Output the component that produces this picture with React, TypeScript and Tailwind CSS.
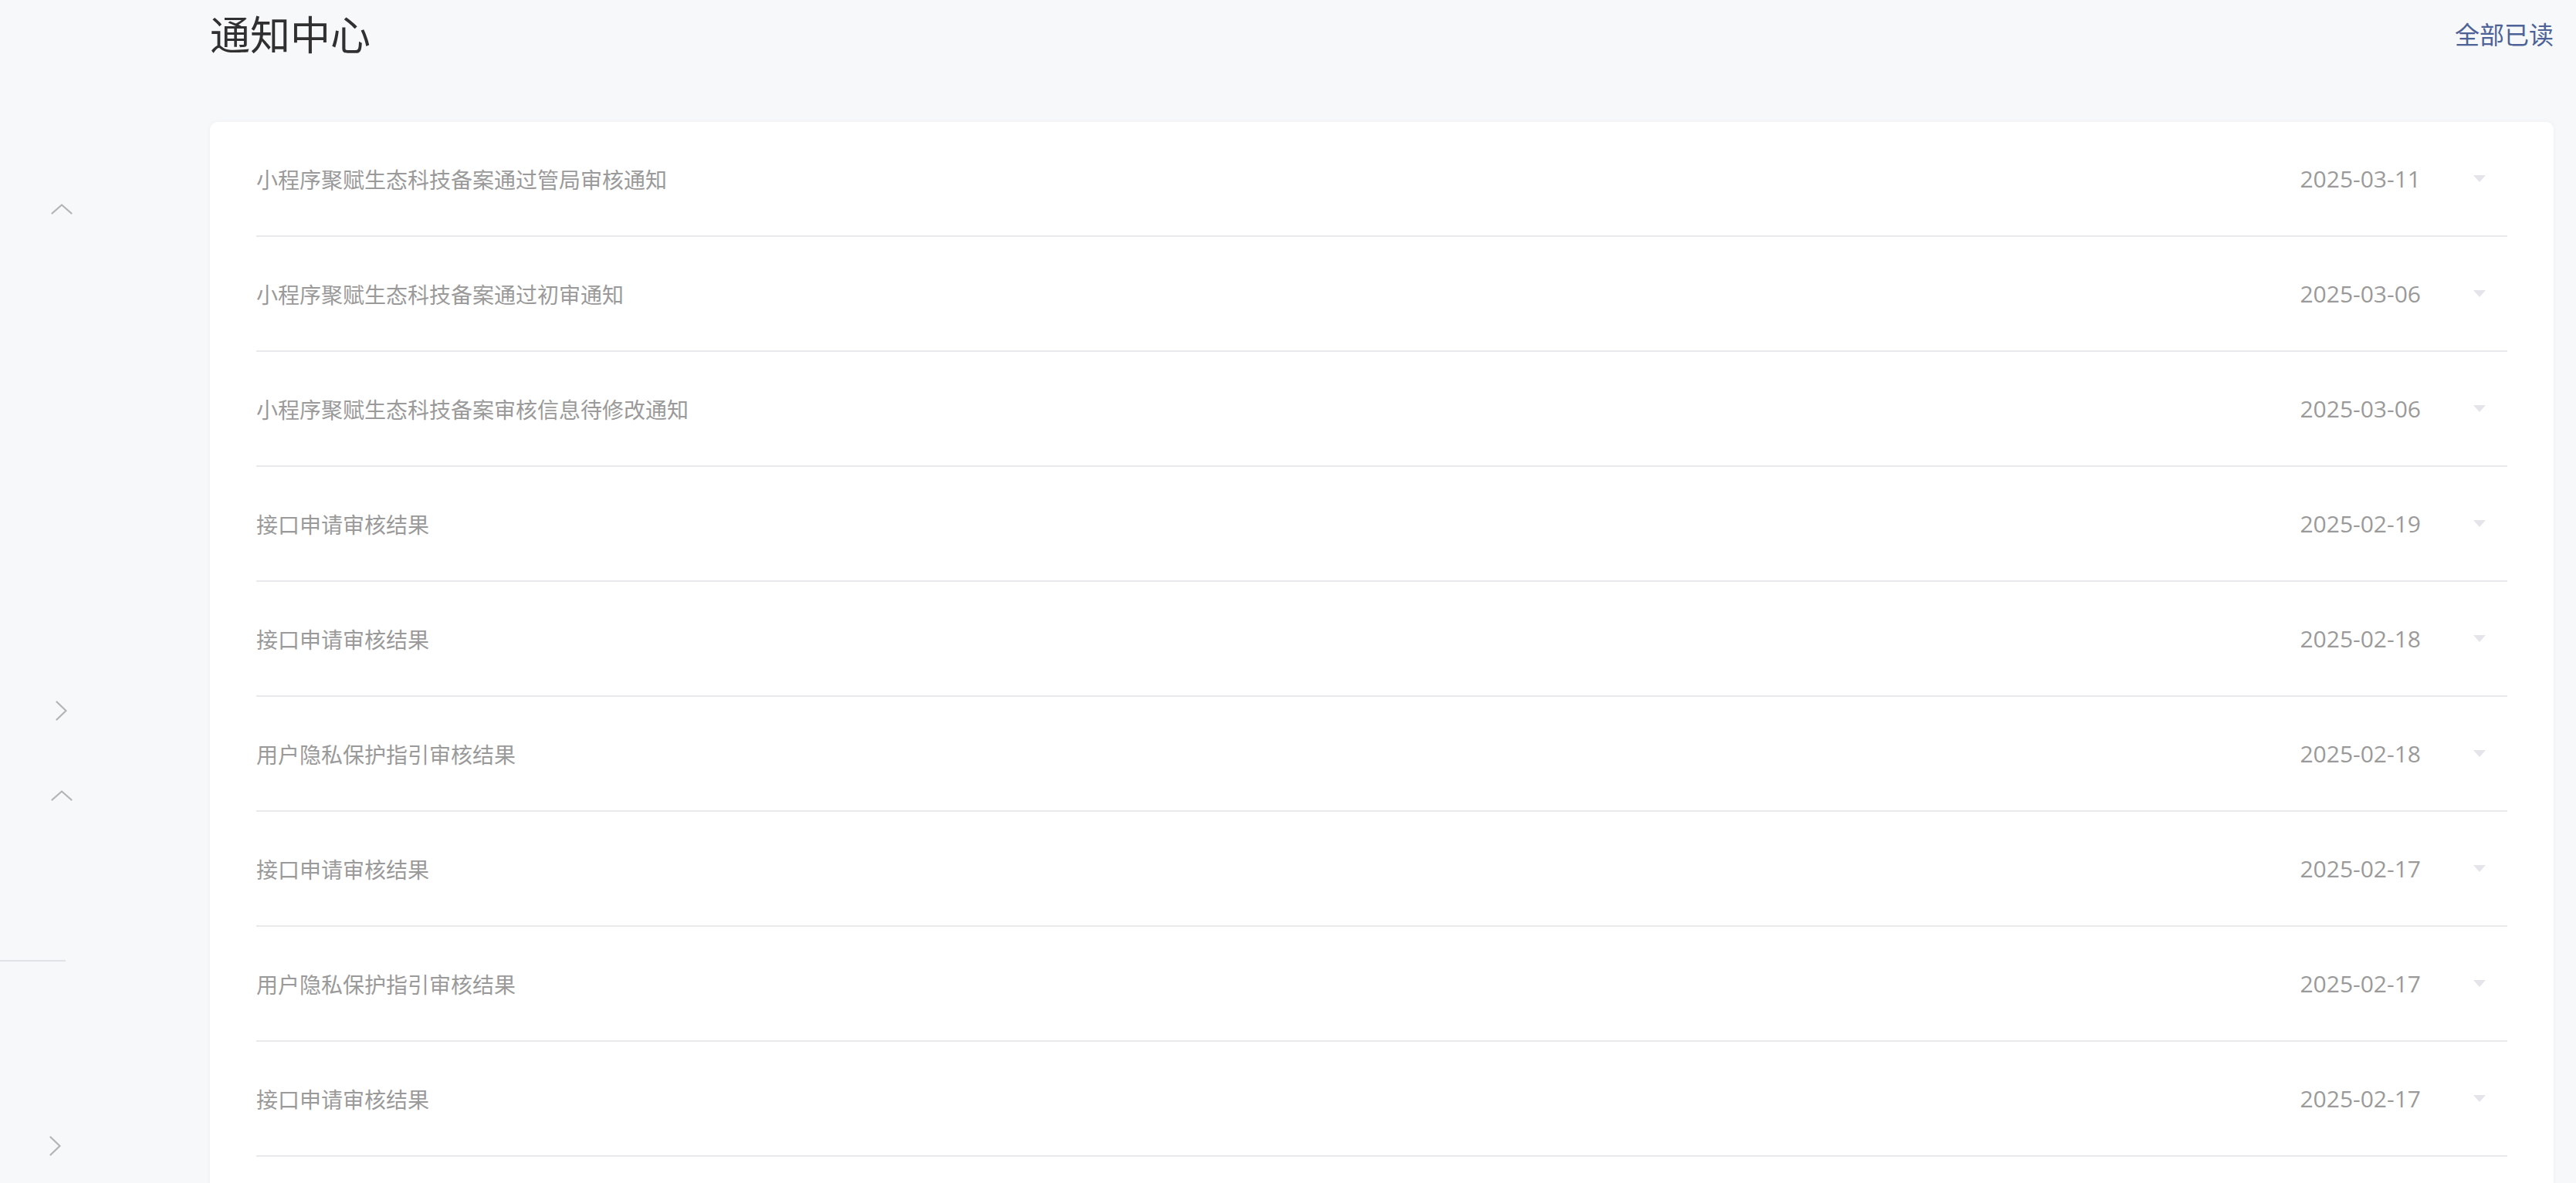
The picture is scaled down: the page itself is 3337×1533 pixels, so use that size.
import React from "react";

const rows: { title: string; date: string }[] = [
  { title: "小程序聚赋生态科技备案通过管局审核通知", date: "2025-03-11" },
  { title: "小程序聚赋生态科技备案通过初审通知", date: "2025-03-06" },
  { title: "小程序聚赋生态科技备案审核信息待修改通知", date: "2025-03-06" },
  { title: "接口申请审核结果", date: "2025-02-19" },
  { title: "接口申请审核结果", date: "2025-02-18" },
  { title: "用户隐私保护指引审核结果", date: "2025-02-18" },
  { title: "接口申请审核结果", date: "2025-02-17" },
  { title: "用户隐私保护指引审核结果", date: "2025-02-17" },
  { title: "接口申请审核结果", date: "2025-02-17" },
];

function ChevronUp() {
  return (
    <svg width="28" height="14" viewBox="0 0 28 14" fill="none">
      <path d="M1.5 12.5 L14 1.5 L26.5 12.5" stroke="#b3b3b3" strokeWidth="2.2" strokeLinecap="round" strokeLinejoin="round" />
    </svg>
  );
}

function ChevronRight() {
  return (
    <svg width="15" height="26" viewBox="0 0 15 26" fill="none">
      <path d="M1.5 1.5 L13.5 13 L1.5 24.5" stroke="#b3b3b3" strokeWidth="2.2" strokeLinecap="round" strokeLinejoin="round" />
    </svg>
  );
}

function Caret() {
  return (
    <svg width="16" height="9" viewBox="0 0 16 9">
      <polygon points="0,0 16,0 8,9" fill="#e4e4ea" />
    </svg>
  );
}

export default function App() {
  return (
    <div
      className="flex h-screen w-full overflow-hidden bg-[#f7f8fa]"
      style={{ fontFamily: '"Open Sans", "Noto Sans CJK SC", sans-serif' }}
    >
      <aside className="flex w-[272px] shrink-0 flex-col">
        <div className="ml-[66px] mt-[264px] flex h-[14px]">
          <ChevronUp />
        </div>
        <div className="ml-[72px] mt-[630px] flex h-[26px]">
          <ChevronRight />
        </div>
        <div className="ml-[66px] mt-[90px] flex h-[14px]">
          <ChevronUp />
        </div>
        <div className="mt-[206px] h-[2px] w-[85px] bg-[#e2e2e6]" />
        <div className="ml-[64px] mt-[226px] flex h-[26px]">
          <ChevronRight />
        </div>
      </aside>

      <main className="flex min-w-0 flex-1 flex-col pr-[29px]">
        <header className="flex h-[86px] shrink-0 items-center justify-between">
          <h1
            className="text-[52px] font-normal leading-none text-[#303030]"
            style={{ fontFamily: '"Noto Sans CJK SC", sans-serif' }}
          >
            通知中心
          </h1>
          <button
            className="text-[32px] leading-none text-[#4d6397]"
            style={{ fontFamily: '"Noto Sans CJK SC", sans-serif' }}
          >
            全部已读
          </button>
        </header>

        <section className="mt-[72px] flex flex-col rounded-[10px] bg-white px-[60px] shadow-[0_0_6px_rgba(0,0,0,0.04)]">
          {rows.map((r, i) => (
            <div
              key={i}
              className="flex h-[149px] shrink-0 items-center border-b-2 border-[#e8e8ed]"
            >
              <span
                className="flex-1 text-[28px] leading-none text-[#9a9a9a]"
                style={{ fontFamily: '"Noto Sans CJK SC", sans-serif' }}
              >
                {r.title}
              </span>
              <span className="text-[30px] leading-none text-[#9a9a9a]">{r.date}</span>
              <span className="ml-[68px] mr-[28px] flex">
                <Caret />
              </span>
            </div>
          ))}
          <div className="h-[149px] shrink-0" />
        </section>
      </main>
    </div>
  );
}
